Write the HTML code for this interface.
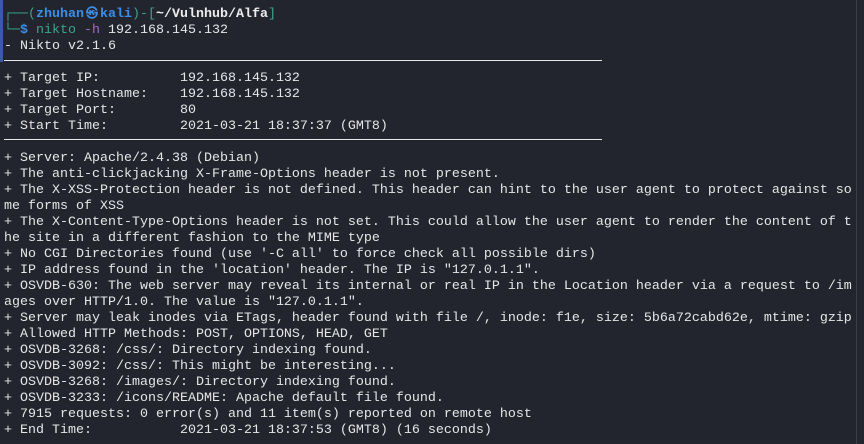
<!DOCTYPE html>
<html><head><meta charset="utf-8"><style>
html,body{margin:0;padding:0;}
body{width:864px;height:444px;background:#22252d;overflow:hidden;position:relative;font-family:"Liberation Mono","DejaVu Sans Mono",monospace;font-size:13.33px;color:#e6e6e6;}
#t{position:absolute;left:4px;top:6px;white-space:pre;line-height:16px;}
.g{color:#3aa58e}.b{color:#3b8ee8;font-weight:bold}.p{color:#a36ad0}.n{color:#3aa58e}.w{color:#ececec;font-weight:bold}
.sep{position:absolute;left:4px;width:598px;height:1px;background:#e8e8e8;}
#bar{position:absolute;left:0;top:0;width:3px;height:62px;background:#3c59a8;}
#vl{position:absolute;left:856px;top:0;width:1px;height:444px;background:#3a3e47;}
.at{display:inline-block;width:16px;text-align:center;font-size:12px;}
</style></head><body>
<div id="bar"></div><div id="vl"></div>
<div class="sep" style="top:60px"></div>
<div class="sep" style="top:139px"></div>
<div id="t"><span class="g">┌──(</span><span class="b">zhuhan<span class="at">㉿</span>kali</span><span class="g">)-[</span><span class="w">~/Vulnhub/Alfa</span><span class="g">]</span>
<span class="g">└─</span><span class="b">$</span> <span class="n">nikto</span> <span class="p">-h</span> 192.168.145.132
- Nikto v2.1.6

+ Target IP:          192.168.145.132
+ Target Hostname:    192.168.145.132
+ Target Port:        80
+ Start Time:         2021-03-21 18:37:37 (GMT8)

+ Server: Apache/2.4.38 (Debian)
+ The anti-clickjacking X-Frame-Options header is not present.
+ The X-XSS-Protection header is not defined. This header can hint to the user agent to protect against so
me forms of XSS
+ The X-Content-Type-Options header is not set. This could allow the user agent to render the content of t
he site in a different fashion to the MIME type
+ No CGI Directories found (use '-C all' to force check all possible dirs)
+ IP address found in the 'location' header. The IP is "127.0.1.1".
+ OSVDB-630: The web server may reveal its internal or real IP in the Location header via a request to /im
ages over HTTP/1.0. The value is "127.0.1.1".
+ Server may leak inodes via ETags, header found with file /, inode: f1e, size: 5b6a72cabd62e, mtime: gzip
+ Allowed HTTP Methods: POST, OPTIONS, HEAD, GET
+ OSVDB-3268: /css/: Directory indexing found.
+ OSVDB-3092: /css/: This might be interesting...
+ OSVDB-3268: /images/: Directory indexing found.
+ OSVDB-3233: /icons/README: Apache default file found.
+ 7915 requests: 0 error(s) and 11 item(s) reported on remote host
+ End Time:           2021-03-21 18:37:53 (GMT8) (16 seconds)</div>
</body></html>
